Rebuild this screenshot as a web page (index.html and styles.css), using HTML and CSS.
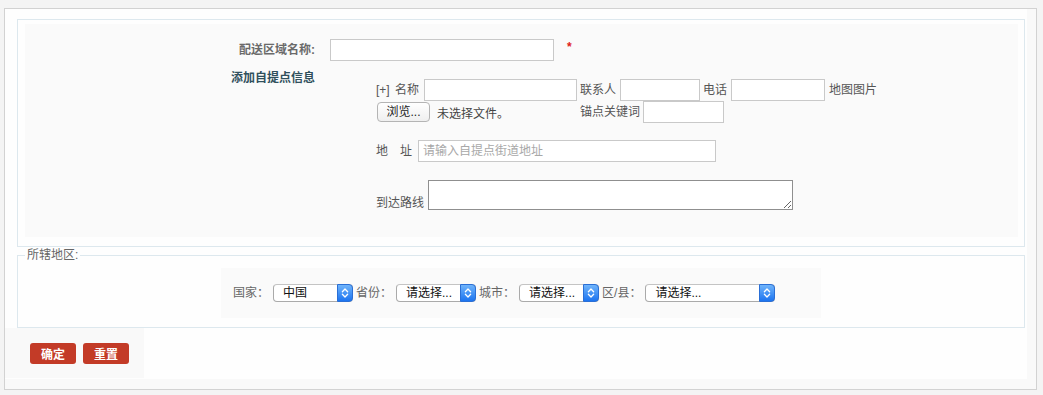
FILE: index.html
```html
<!DOCTYPE html>
<html lang="zh-CN">
<head>
  <meta charset="UTF-8" />
  <title>配送区域</title>
  <link rel="stylesheet" href="styles.css">
</head>
<body>
  <div class="wrap">
    <div class="main">
      <div class="box">
        <div class="panel">
          <div class="row">
            <div class="lbl">配送区域名称:</div>
            <div class="val">
              <input type="text" class="ipt name-ipt" />
              <span class="req">*</span>
            </div>
          </div>
          <div class="row row-pick">
            <div class="lbl lbl-blue">添加自提点信息</div>
            <div class="val pick">
              <div class="line">
                <span class="txt plus">[+] 名称</span>
                <input type="text" class="ipt w153 ml3" />
                <span class="txt ml3">联系人</span>
                <input type="text" class="ipt w80 ml4" />
                <span class="txt ml3">电话</span>
                <input type="text" class="ipt w94 ml4" />
                <span class="txt ml4">地图图片</span>
              </div>
              <div class="line">
                <span class="file">
                  <span class="file-btn">浏览...</span>
                  <span class="file-name">未选择文件。</span>
                </span>
                <span class="txt">锚点关键词</span>
                <input type="text" class="ipt w81 ml3" />
              </div>
              <div class="line addr">
                <span class="txt">地　址</span>
                <input type="text" class="ipt w298 ml6" placeholder="请输入自提点街道地址" />
              </div>
              <div class="line route">
                <span class="txt">到达路线</span>
                <textarea class="route-ta"></textarea>
              </div>
            </div>
          </div>
        </div>
      </div>

      <fieldset class="area">
        <legend>所辖地区:</legend>
        <div class="area-inner">
          <span class="txt">国家：</span>
          <span class="sel w80">
            <select><option>中国</option></select>
            <span class="arr"><svg viewBox="0 0 16 18"><path d="M5 7.5 8 4.5 11 7.5M5 10.5 8 13.5 11 10.5" /></svg></span>
          </span>
          <span class="txt">省份：</span>
          <span class="sel w80">
            <select><option>请选择...</option></select>
            <span class="arr"><svg viewBox="0 0 16 18"><path d="M5 7.5 8 4.5 11 7.5M5 10.5 8 13.5 11 10.5" /></svg></span>
          </span>
          <span class="txt">城市：</span>
          <span class="sel w80">
            <select><option>请选择...</option></select>
            <span class="arr"><svg viewBox="0 0 16 18"><path d="M5 7.5 8 4.5 11 7.5M5 10.5 8 13.5 11 10.5" /></svg></span>
          </span>
          <span class="txt">区/县：</span>
          <span class="sel w130">
            <select><option>请选择...</option></select>
            <span class="arr"><svg viewBox="0 0 16 18"><path d="M5 7.5 8 4.5 11 7.5M5 10.5 8 13.5 11 10.5" /></svg></span>
          </span>
        </div>
      </fieldset>

      <div class="btns">
        <button class="btn">确定</button>
        <button class="btn">重置</button>
      </div>
    </div>
  </div>
</body>
</html>
```

FILE: styles.css
```css
* {
  box-sizing: border-box;
}
body {
  margin: 0;
  padding: 8px 0 0 4px;
  background-color: #f4f4f4;
  font-family: "Liberation Sans", "Noto Sans CJK SC", sans-serif;
  font-size: 12px;
  color: #555;
}
.wrap {
  width: 1033px;
  height: 382px;
  border: 1px solid #d2d2d2;
  background-color: #f9f9f9;
  padding: 0 9px 10px 0;
}
.main {
  background-color: #fefefe;
  height: 370px;
  padding-top: 10px;
}

/* 上面的表单 */
.box {
  margin: 0 2px 0 12px;
  border: 1px solid #dde8ee;
  padding: 4px 6px 9px 7px;
}
.panel {
  background-color: #fafafa;
  height: 213px;
  padding-top: 15px;
}
.row {
  display: flex;
  align-items: flex-start;
}
.lbl {
  width: 290px;
  text-align: right;
  font-weight: bold;
  color: #6a6a6a;
  line-height: 22px;
}
.lbl-blue {
  color: #30505c;
  line-height: 16px;
}
.val {
  margin-left: 15px;
  display: flex;
  align-items: center;
}
.row-pick {
  margin-top: 9px;
}
.pick {
  display: block;
  padding: 9px 0 0 46px;
}
.line {
  display: flex;
  align-items: center;
  height: 22px;
}
.txt {
  line-height: 16px;
  white-space: nowrap;
}
.plus {
  width: 45px;
  word-spacing: 2px;
}
.ipt {
  height: 22px;
  border: 1px solid #c9c9c9;
  background-color: #fff;
  padding: 0 4px;
  font-family: inherit;
  font-size: 12px;
  outline: none;
}
.ipt::placeholder {
  color: #a8a8a8;
}
.name-ipt {
  width: 224px;
}
.req {
  color: #e0201b;
  font-weight: bold;
  margin-left: 13px;
  position: relative;
  top: -3px;
}
.w153 { width: 153px; }
.w80 { width: 80px; }
.w94 { width: 94px; }
.w81 { width: 81px; }
.w298 { width: 298px; }
.w130 { width: 130px; }
.ml3 { margin-left: 3px; }
.ml4 { margin-left: 4px; }
.ml6 { margin-left: 6px; }

.file {
  width: 204px;
  display: flex;
  align-items: center;
}
.file-btn {
  margin-left: 1px;
  width: 53px;
  height: 20px;
  line-height: 18px;
  text-align: center;
  border: 1px solid #b4b4b4;
  border-radius: 4px;
  background: linear-gradient(#ffffff, #efefef);
  color: #222;
}
.file-name {
  margin-left: 7px;
  color: #444;
}
.addr {
  margin-top: 17px;
}
.route {
  margin-top: 18px;
  height: 30px;
  align-items: flex-end;
}
.route .txt {
  position: relative;
  top: 1px;
}
.route-ta {
  margin-left: 4px;
  width: 365px;
  height: 30px;
  border: 1px solid #8f8f8f;
  background-color: #fff;
  resize: both;
}

/* 所辖地区 */
.area {
  margin: 0 2px 0 12px;
  border: 1px solid #dde8ee;
  padding: 5px 7px 9px 7px;
  min-width: 0;
}
.area legend {
  padding: 0 2px;
  line-height: 16px;
  color: #666;
}
.area-inner {
  width: 600px;
  height: 50px;
  margin: 0 auto;
  background-color: #fafafa;
  display: flex;
  align-items: center;
  padding-left: 12px;
}
.area-inner .txt {
  color: #666;
}
.sel {
  position: relative;
  display: inline-block;
  height: 18px;
  margin: 0 3px 0 4px;
}
.sel select {
  appearance: none;
  -webkit-appearance: none;
  width: 100%;
  height: 18px;
  border: 1px solid #aaa;
  border-top-color: #c4c4c4;
  border-radius: 4px;
  background-color: #fff;
  padding: 0 16px 0 9px;
  font-family: inherit;
  font-size: 12px;
  line-height: 16px;
  color: #111;
  outline: none;
}
.sel .arr {
  position: absolute;
  right: 0;
  top: 0;
  width: 16px;
  height: 18px;
  border-radius: 0 4px 4px 0;
  background: linear-gradient(#6fb4fb, #1c74f0);
  border: 1px solid #2a6fd6;
}
.sel .arr svg {
  display: block;
  width: 14px;
  height: 16px;
  fill: none;
  stroke: white;
  stroke-width: 1.5;
  stroke-linecap: round;
  stroke-linejoin: round;
}

.btns {
  width: 139px;
  height: 50px;
  background-color: #f9f9f9;
  padding: 15px 0 0 25px;
  display: flex;
  gap: 7px;
}
.btn {
  width: 46px;
  height: 21px;
  padding: 0;
  border: none;
  border-radius: 3px;
  background-color: #c33b27;
  color: white;
  font-family: inherit;
  font-size: 12px;
  font-weight: bold;
  cursor: pointer;
}
```
